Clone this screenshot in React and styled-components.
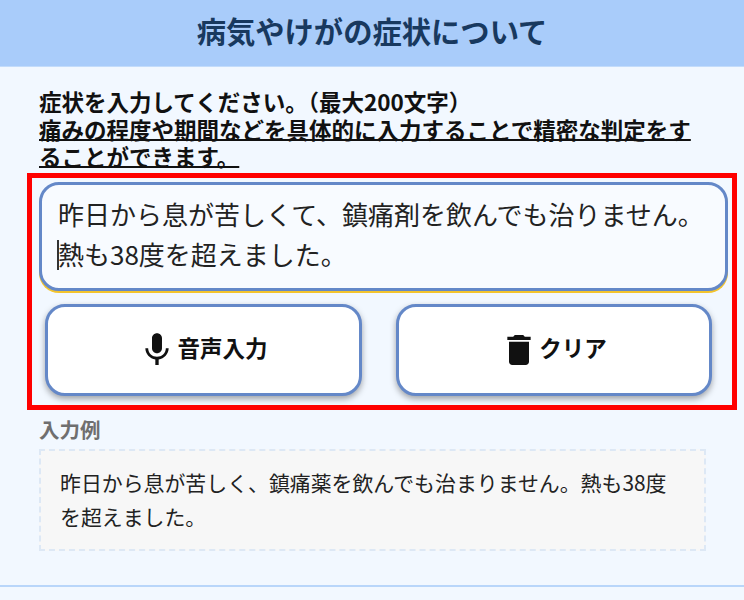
import React from 'react'
import styled, { createGlobalStyle } from 'styled-components'
import { MdMic, MdDelete } from 'react-icons/md'

const GlobalStyle = createGlobalStyle`
    * {
        box-sizing: border-box;
    }
    html, body {
        margin: 0;
        height: 600px;
        overflow: hidden;
        background: #f2f8ff;
        font-family: "Noto Sans CJK JP", "Noto Sans", sans-serif;
    }
`

const Page = styled.div`
    width: 744px;
    height: 600px;
    background: #f2f8ff;
`

const Header = styled.header`
    height: 67px;
    padding-bottom: 7px;
    display: flex;
    align-items: center;
    justify-content: center;
    background: #a9ccfa;
    border-bottom: 1px solid #c3dcfb;
`

const Title = styled.h1`
    margin: 0;
    font-size: 29.3px;
    font-weight: 700;
    color: #18395f;
`

const Body = styled.main`
    height: 520px;
    padding: 21px 0 0 27px;
    border-bottom: 2px solid #b9d6fa;
`

const Instructions = styled.div`
    margin: 0 40px 0 12px;
    font-size: 22.5px;
    line-height: 27.5px;
    font-weight: 700;
    color: #111;
`

const Emphasis = styled.span`
    display: block;
    text-decoration: underline;
    text-underline-offset: 0px;
    text-decoration-thickness: 2px;
`

const Highlight = styled.section`
    width: 710px;
    height: 237px;
    margin-top: 2.5px;
    padding: 4px 4px 8px 7px;
    border: 5px solid #ff0000;
    display: flex;
    flex-direction: column;
    gap: 13px;
`

const Symptoms = styled.div`
    position: relative;
    height: 109px;
    padding: 9px 10px 0 16px;
    border: 3px solid #6488c8;
    border-radius: 20px;
    background: #f8fbff;
    box-shadow: 0 2px 0 #f3c42e;
    font-size: 26px;
    line-height: 40px;
    color: #222;
`

const Caret = styled.span`
    position: absolute;
    left: 15px;
    top: 55px;
    width: 2px;
    height: 30px;
    background: #333;
`

const Buttons = styled.div`
    display: grid;
    grid-template-columns: 317px 316px;
    justify-content: space-between;
    margin: 0 16px 0 6px;
`

const ActionButton = styled.button`
    height: 92px;
    display: flex;
    align-items: center;
    justify-content: center;
    padding: 0 2px 0 0;
    border: 3px solid #6488c8;
    border-radius: 20px;
    background: #fff;
    box-shadow: 0 3px 6px rgba(0, 0, 0, 0.35);
    font-family: inherit;
    font-size: 22.5px;
    font-weight: 700;
    color: #111;
`

const ButtonLabel = styled.span`
    margin-bottom: 6px;
`

const ExampleTitle = styled.div`
    margin: 4px 0 0 12px;
    font-size: 20.5px;
    line-height: 30px;
    font-weight: 700;
    color: #6f6f6f;
`

const Example = styled.div`
    width: 667px;
    height: 102px;
    margin: 5px 0 0 12px;
    padding: 14px 19px 0;
    border: 2px dashed #dde8f5;
    background: #f7f7f7;
    font-size: 20.9px;
    line-height: 34px;
    color: #222;
`

const App = () => {
    return (
        <Page>
            <GlobalStyle />
            <Header>
                <Title>病気やけがの症状について</Title>
            </Header>
            <Body>
                <Instructions>
                    症状を入力してください。（最大200文字）
                    <Emphasis>痛みの程度や期間などを具体的に入力することで精密な判定をすることができます。</Emphasis>
                </Instructions>
                <Highlight>
                    <Symptoms>
                        <Caret />
                        昨日から息が苦しくて、鎮痛剤を飲んでも治りません。熱も38度を超えました。
                    </Symptoms>
                    <Buttons>
                        <ActionButton>
                            <MdMic size={40} />
                            <ButtonLabel>音声入力</ButtonLabel>
                        </ActionButton>
                        <ActionButton>
                            <MdDelete size={40} />
                            <ButtonLabel>クリア</ButtonLabel>
                        </ActionButton>
                    </Buttons>
                </Highlight>
                <ExampleTitle>入力例</ExampleTitle>
                <Example>昨日から息が苦しく、鎮痛薬を飲んでも治まりません。熱も38度を超えました。</Example>
            </Body>
        </Page>
    )
}

export default App
